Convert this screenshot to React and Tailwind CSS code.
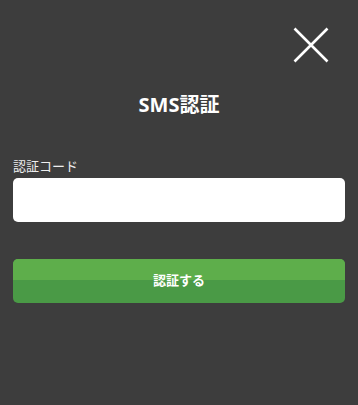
import { useState } from "react";

const SmsVerify = () => {
  const [code, setCode] = useState("");

  return (
    <div
      className="relative h-[405px] w-full bg-[#3d3d3d] px-[13px]"
      style={{ fontFamily: '"Noto Sans", "Noto Sans CJK JP", sans-serif' }}
    >
      {/* Close button */}
      <button className="absolute right-[29px] top-[27px] h-[36px] w-[36px]">
        <svg viewBox="0 0 36 36" className="h-full w-full" fill="none" stroke="#fff" strokeWidth="2.6">
          <path d="M1.5 1.5 L34.5 34.5 M34.5 1.5 L1.5 34.5" />
        </svg>
      </button>

      <h1 className="pt-[90px] text-center text-[20px] font-bold leading-[30px] text-white">SMS認証</h1>

      <label className="mt-[37px] block text-[13px] leading-[18px] text-[#eeeeee]">認証コード</label>
      <input
        type="text"
        value={code}
        onChange={(e) => setCode(e.target.value)}
        className="mt-[3px] block h-[44px] w-full rounded-[5px] bg-white px-3 text-[15px] text-gray-900 outline-none"
      />

      <button className="relative mt-[37px] flex h-[44px] w-full items-center justify-center overflow-hidden rounded-[5px] bg-[#4a9a46]">
        <span className="absolute inset-x-0 top-0 h-[21px] bg-[#5eae4b]" />
        <span className="relative text-[13px] font-bold text-white">認証する</span>
      </button>
    </div>
  );
};

export default function App() {
  return <SmsVerify />;
}
